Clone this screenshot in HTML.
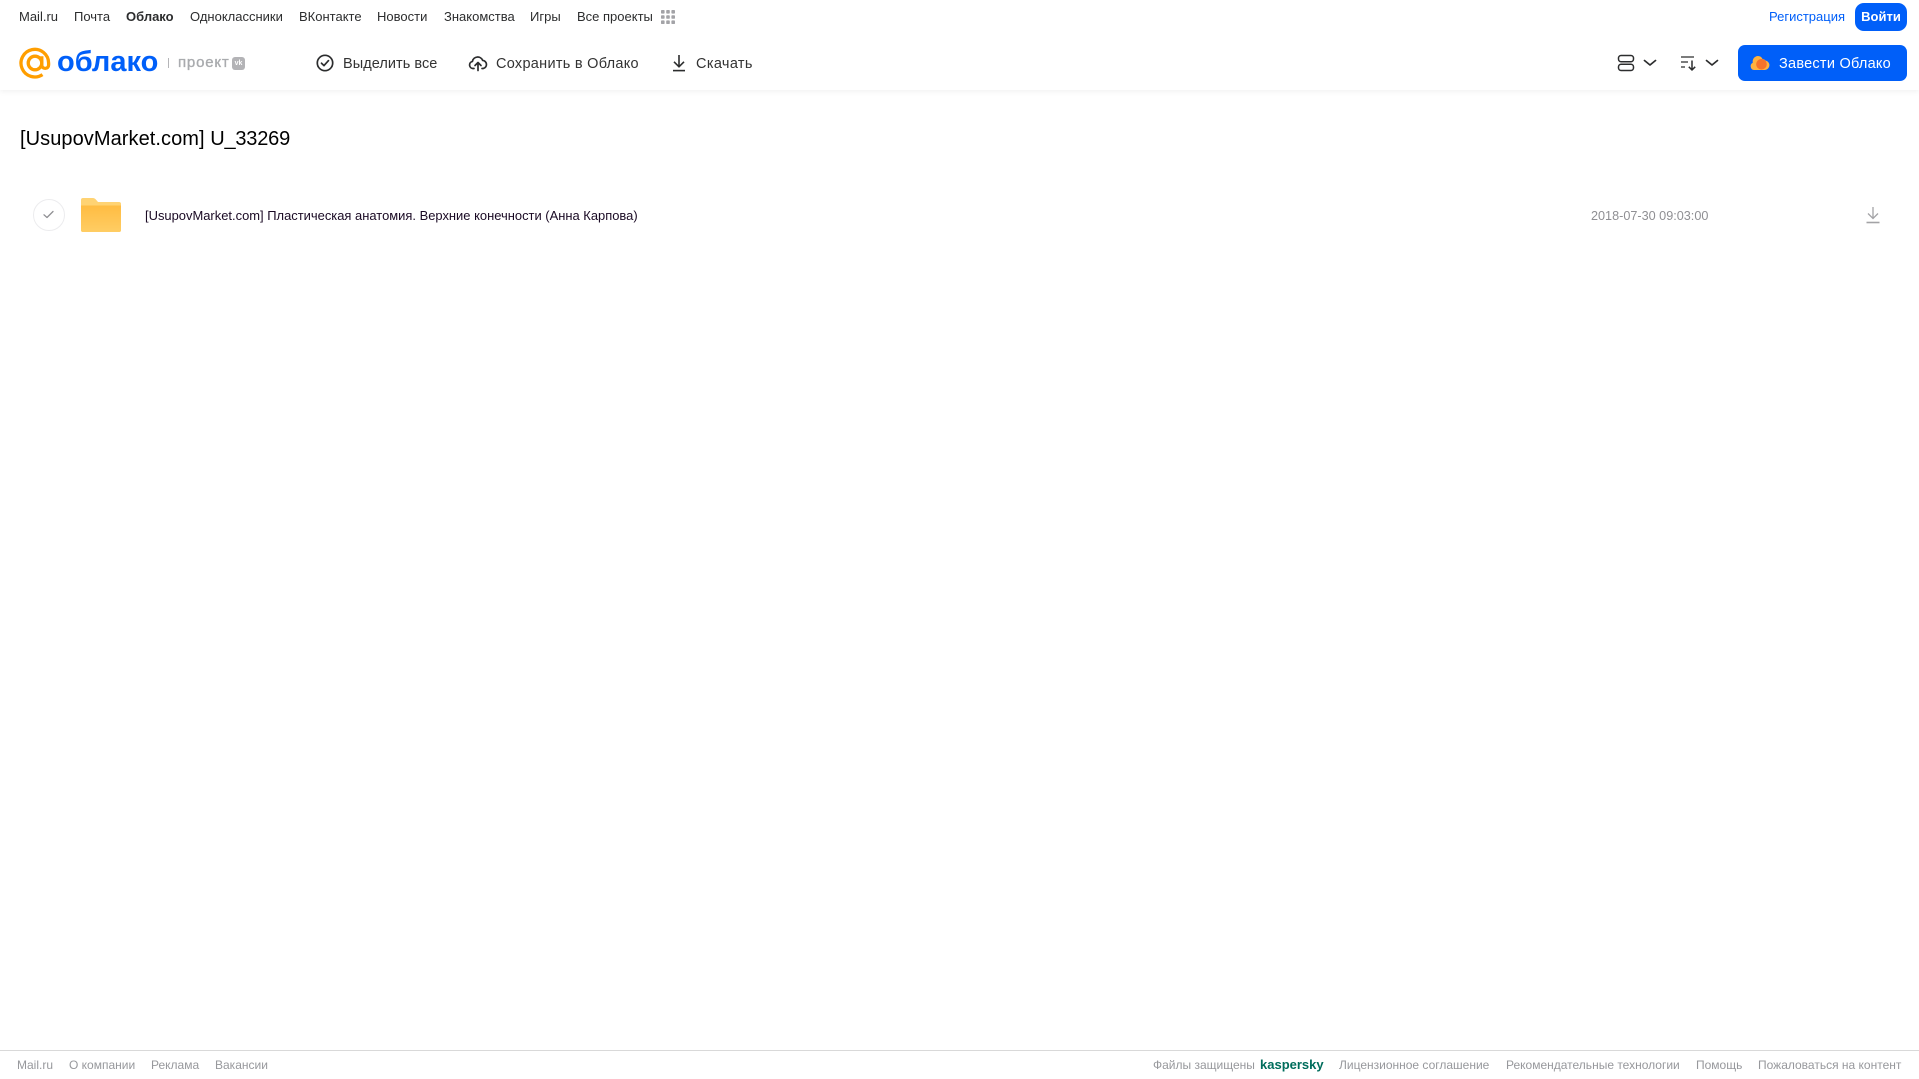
<!DOCTYPE html>
<html lang="ru"><head><meta charset="utf-8"><title>Облако</title>
<style>
html,body{margin:0;padding:0;background:#fff}
body{width:1919px;height:1079px;position:relative;overflow:hidden;font-family:"Liberation Sans",sans-serif}
.t{position:absolute;white-space:nowrap;line-height:20px;height:20px}
.n{font-size:13px;color:#2c2d2e;top:7px}
.b{font-size:14.5px;color:#333;top:54px;letter-spacing:.35px}
.f{font-size:12px;color:#97989c;top:1055px}
svg{position:absolute;display:block}
</style></head><body>
<div style="position:absolute;left:0;top:0;width:1919px;height:90px;background:#fff;box-shadow:0 1px 6px rgba(0,0,0,.07)"></div>

<span class="t n" style="left:19px">Mail.ru</span>
<span class="t n" style="left:74px">Почта</span>
<span class="t n" style="left:126px;font-weight:bold">Облако</span>
<span class="t n" style="left:190px">Одноклассники</span>
<span class="t n" style="left:299px">ВКонтакте</span>
<span class="t n" style="left:377px">Новости</span>
<span class="t n" style="left:444px">Знакомства</span>
<span class="t n" style="left:530px">Игры</span>
<span class="t n" style="left:577px">Все проекты</span>
<svg style="left:660px;top:9px" width="16" height="16" viewBox="0 0 16 16" fill="#a3a3a7"><rect x="1" y="1" width="3.6" height="3.6" rx=".8"/><rect x="6.2" y="1" width="3.6" height="3.6" rx=".8"/><rect x="11.4" y="1" width="3.6" height="3.6" rx=".8"/><rect x="1" y="6.2" width="3.6" height="3.6" rx=".8"/><rect x="6.2" y="6.2" width="3.6" height="3.6" rx=".8"/><rect x="11.4" y="6.2" width="3.6" height="3.6" rx=".8"/><rect x="1" y="11.4" width="3.6" height="3.6" rx=".8"/><rect x="6.2" y="11.4" width="3.6" height="3.6" rx=".8"/><rect x="11.4" y="11.4" width="3.6" height="3.6" rx=".8"/></svg>

<svg style="left:19px;top:47px" width="33" height="33" viewBox="0 0 33 33" fill="none" stroke="#ff9e00" stroke-width="3.3"><circle cx="16" cy="16" r="6.8"/><path d="M22.8 9.200V18a3.400 3.400 0 0 0 6.800 0V16A13.800 13.800 0 1 0 23.500 27.600"/></svg>
<span class="t" style="left:57px;top:45px;height:34px;line-height:34px;font-size:29px;font-weight:bold;color:#005ff9">облако</span>
<div style="position:absolute;left:168px;top:58px;width:1px;height:10px;background:#b5b5b8"></div>
<span class="t" style="left:178px;top:53px;font-size:15px;color:#a9abae;letter-spacing:.8px;-webkit-text-stroke:.35px #a9abae">проект</span>
<div style="position:absolute;left:232px;top:57px;width:13px;height:13px;border-radius:3px;background:#b3b3b6;color:#fff;font-size:7px;font-weight:bold;line-height:13px;text-align:center">vk</div>

<svg style="left:315px;top:54px" width="20" height="18" viewBox="0 0 20 18" fill="none" stroke="#2c2d2e" stroke-width="1.7"><circle cx="10" cy="9" r="7.7"/><path d="M6.500 9.200l2.500 2.400 4.500-5" stroke-linecap="round" stroke-linejoin="round"/></svg>
<span class="t b" style="left:343px;letter-spacing:.05px">Выделить все</span>
<svg style="left:468px;top:54px" width="20" height="18" viewBox="0 0 20 18" fill="none" stroke="#2c2d2e" stroke-width="1.7" stroke-linecap="round" stroke-linejoin="round"><path d="M6 14.500H4.800A3.600 3.600 0 0 1 4.400 7.400 5.400 5.400 0 0 1 14.700 6.400 4.100 4.100 0 0 1 15.200 14.500H14"/><path d="M10 16.500V9M7 11.500L10 8.500l3 3"/></svg>
<span class="t b" style="left:496px;letter-spacing:.28px">Сохранить в Облако</span>
<svg style="left:670px;top:54px" width="18" height="18" viewBox="0 0 18 18" fill="none" stroke="#2c2d2e" stroke-width="1.6"><path d="M9 1v11.500M4 7.800l5 5 5-5"/><path d="M3 16.600h12"/></svg>
<span class="t b" style="left:696px">Скачать</span>

<span class="t n" style="left:1769px;color:#005ff9">Регистрация</span>
<div style="position:absolute;left:1855px;top:3px;width:52px;height:28px;border-radius:9px;background:#005ff9;color:#fff;font-size:13px;font-weight:bold;line-height:28px;text-align:center">Войти</div>

<svg style="left:1617px;top:54px" width="18" height="18" viewBox="0 0 18 18" fill="none" stroke="#2c2d2e" stroke-width="1.5"><rect x="1.500" y="1.500" width="15" height="6.200" rx="2.600"/><rect x="1.500" y="10.300" width="15" height="6.200" rx="2.600"/></svg>
<svg style="left:1643px;top:58px" width="14" height="10" viewBox="0 0 14 10" fill="none" stroke="#2c2d2e" stroke-width="1.700" stroke-linecap="round" stroke-linejoin="round"><path d="M1.500 2.500L7 7l5.500-4.500"/></svg>
<svg style="left:1680px;top:54px" width="18" height="18" viewBox="0 0 18 18" fill="none" stroke="#2c2d2e" stroke-width="1.300"><path d="M1 3h13M1 8h7M1 13h4"/><path d="M12 6.500V16M8.800 12.800L12 16l3.200-3.200" stroke-width="1.500"/></svg>
<svg style="left:1705px;top:58px" width="14" height="10" viewBox="0 0 14 10" fill="none" stroke="#2c2d2e" stroke-width="1.700" stroke-linecap="round" stroke-linejoin="round"><path d="M1.500 2.500L7 7l5.500-4.500"/></svg>

<div style="position:absolute;left:1738px;top:45px;width:169px;height:36px;border-radius:7px;background:#005ff9"></div>
<svg style="left:1750px;top:53px" width="20" height="20" viewBox="0 0 20 20"><path d="M4 17A3.800 3.800 0 0 1 2.800 9.800 5.500 5.500 0 0 1 8 3 5 5 0 0 1 12.500 6 4.300 4.300 0 0 1 15.500 7.500 4.800 4.800 0 0 1 15 17Z" fill="#ffb23f"/><circle cx="11.500" cy="11.300" r="5.300" fill="#f5732b"/></svg>
<span class="t" style="left:1779px;top:54px;font-size:14.5px;color:#fff;letter-spacing:.25px">Завести Облако</span>

<span class="t" style="left:20px;top:127px;height:24px;line-height:24px;font-size:20px;color:#000"><span style="letter-spacing:.07px">[UsupovMarket.com]</span> <span style="letter-spacing:-.2px">U_33269</span></span>

<div style="position:absolute;left:33px;top:199px;width:30px;height:30px;border:1px solid #ececee;border-radius:50%"></div>
<svg style="left:42px;top:209px" width="13" height="11" viewBox="0 0 13 11" fill="none" stroke="#8f8f93" stroke-width="1.300" stroke-linecap="round" stroke-linejoin="round"><path d="M2 5.800l3 2.700 6-6"/></svg>
<svg style="left:80px;top:197px" width="42" height="36" viewBox="0 0 42 36"><defs><linearGradient id="g" x1="0" y1="0" x2="0" y2="1"><stop offset="0" stop-color="#ffbc42"/><stop offset="1" stop-color="#ffcd64"/></linearGradient></defs><path d="M3 1h9.500c2 0 3 1 4 2.300L18 5h21a2 2 0 0 1 2 2v26a2 2 0 0 1-2 2H3a2 2 0 0 1-2-2V3a2 2 0 0 1 2-2Z" fill="#ffd373"/><path d="M1 8.500h40V33a2 2 0 0 1-2 2H3a2 2 0 0 1-2-2Z" fill="url(#g)"/></svg>
<span class="t" style="left:145px;top:206px;font-size:12.950px;color:#1a0a24">[UsupovMarket.com] Пластическая анатомия. Верхние конечности (Анна Карпова)</span>
<span class="t" style="left:1591px;top:206px;font-size:12.650px;color:#8f8f93">2018-07-30 09:03:00</span>
<svg style="left:1865px;top:206px" width="16" height="18" viewBox="0 0 16 18" fill="none" stroke="#a3a3a6" stroke-width="1.300"><path d="M8 1v11M3 7.500l5 5 5-5"/><path d="M1.500 16.500h13" stroke-width="1.600"/></svg>

<div style="position:absolute;left:0;top:1050px;width:1919px;height:1px;background:#d9d9d9"></div>
<span class="t f" style="left:17px">Mail.ru</span>
<span class="t f" style="left:69px">О компании</span>
<span class="t f" style="left:151px">Реклама</span>
<span class="t f" style="left:215px">Вакансии</span>
<span class="t f" style="left:1153px">Файлы защищены</span>
<span class="t f" style="left:1260px;color:#006d5c;font-weight:bold;font-size:13px">kaspersky</span>
<span class="t f" style="left:1339px">Лицензионное соглашение</span>
<span class="t f" style="left:1506px">Рекомендательные технологии</span>
<span class="t f" style="left:1696px">Помощь</span>
<span class="t f" style="left:1758px">Пожаловаться на контент</span>
</body></html>
